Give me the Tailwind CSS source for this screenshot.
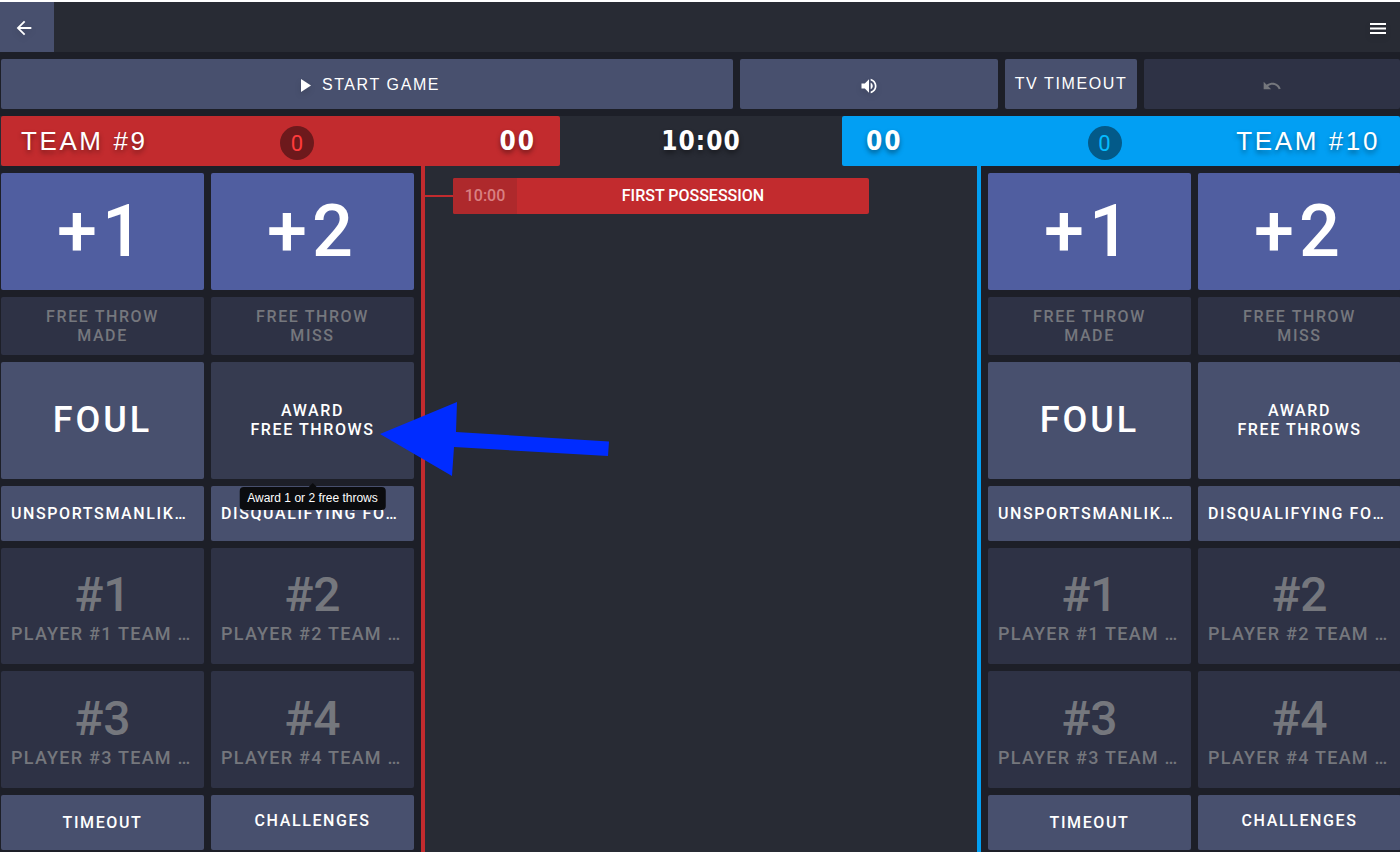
<!DOCTYPE html>
<html lang="en">
<head>
<meta charset="utf-8">
<meta name="viewport" content="width=device-width, initial-scale=1">
<title>Game scoring</title>
<script src="https://cdn.jsdelivr.net/npm/@tailwindcss/browser@4"></script>
</head>
<body class="flex min-h-screen flex-col overflow-x-hidden border-t-2 border-white bg-[#1d1f28] font-['Roboto',sans-serif] font-medium text-white text-shadow-[0_3px_5px_rgb(0_0_0/0.4)]">

<header class="flex h-[50px] items-stretch justify-between bg-[#282b34]">
  <button aria-label="Back" class="flex w-[54px] items-center justify-center bg-[#48506e] pr-1.5 pt-0.5">
    <svg class="size-[22px] drop-shadow-md" viewBox="0 0 24 24" fill="#fff"><path d="M20 11H7.830l5.590-5.590L12 4l-8 8 8 8 1.410-1.410L7.830 13H20v-2z"/></svg>
  </button>
  <button aria-label="Menu" class="flex items-center pr-3 pt-0.5">
    <svg class="size-5 drop-shadow-md" viewBox="0 0 20 20" fill="#fff"><path d="M2 5h16v2H2zM2 9.500h16v2H2zM2 14h16v2H2z"/></svg>
  </button>
</header>

<div class="mt-[7px] grid h-[50px] grid-cols-[732fr_258fr_132fr_256fr] gap-[7px] pl-px font-['Liberation_Sans',sans-serif] tracking-widest">
  <button class="flex items-center justify-center gap-2 rounded-xs bg-[#48506e] pl-1 pt-0.5">
    <svg class="size-4 drop-shadow-md" viewBox="0 0 16 16" fill="#fff"><path d="M3 2v13l10-6.500z"/></svg>
    <span class="text-base">START GAME</span>
  </button>
  <button aria-label="Sound" class="flex items-center justify-center rounded-xs bg-[#48506e] pt-1">
    <svg class="size-5 drop-shadow-md" viewBox="0 0 24 24" fill="#fff"><path d="M3 9v6h4l5 5V4L7 9H3zm13.500 3c0-1.770-1.020-3.290-2.500-4.030v8.050c1.480-.73 2.500-2.250 2.500-4.020zM14 3.230v2.060c2.890.86 5 3.540 5 6.710s-2.110 5.850-5 6.710v2.060c4.010-.91 7-4.490 7-8.770s-2.990-7.860-7-8.770z"/></svg>
  </button>
  <button class="whitespace-nowrap rounded-xs bg-[#48506e] text-base">TV TIMEOUT</button>
  <button aria-label="Undo" disabled class="flex items-center justify-center rounded-xs bg-[#2e3245] pt-1">
    <svg class="size-5" viewBox="0 0 24 24" fill="#75777d"><path d="M12.500 8c-2.650 0-5.050.99-6.900 2.600L2 7v9h9l-3.620-3.620c1.390-1.160 3.160-1.880 5.120-1.880 3.540 0 6.550 2.310 7.600 5.500l2.370-.78C21.080 11.030 17.150 8 12.500 8z"/></svg>
  </button>
</div>

<div class="mt-[7px] grid h-[50px] grid-cols-[560fr_282fr_558fr] bg-[#282b34] font-['Liberation_Sans',sans-serif]">
  <div class="ml-px grid grid-cols-[7fr_auto_6fr] items-center rounded-xs bg-[#c22b2e] pl-5 pr-6">
    <span class="text-[26px] tracking-widest">TEAM #9</span>
    <span class="mt-1 flex size-[34px] items-center justify-center rounded-full bg-[#6d191c] font-['Roboto',sans-serif] text-[22px] font-normal text-[#ff3b3b] text-shadow-none">0</span>
    <span class="text-right font-['DejaVu_Sans_Condensed','DejaVu_Sans',sans-serif] text-[26px] font-bold tracking-[2px]">00</span>
  </div>
  <div class="flex items-center justify-center font-['DejaVu_Sans_Condensed','DejaVu_Sans',sans-serif] text-[26px] font-bold tracking-[1px]">10:00</div>
  <div class="grid grid-cols-[6fr_auto_7fr] items-center rounded-xs bg-[#029ff3] pl-6 pr-5">
    <span class="font-['DejaVu_Sans_Condensed','DejaVu_Sans',sans-serif] text-[26px] font-bold tracking-[2px]">00</span>
    <span class="mt-1 flex size-[34px] items-center justify-center rounded-full bg-[#035a89] font-['Roboto',sans-serif] text-[22px] font-normal text-[#04bcff] text-shadow-none">0</span>
    <span class="text-right text-[26px] tracking-widest">TEAM #10</span>
  </div>
</div>

<main class="grid grow grid-cols-[425fr_552fr_423fr]">
  <section aria-label="Team 9" class="border-r-4 border-[#c22b2e] pb-0.5 pl-px pr-[7px] pt-[7px]">
    <div class="grid h-full grid-cols-2 grid-rows-[117fr_58fr_117fr_55fr_116fr_117fr_55fr] gap-[7px] text-base leading-[19px] tracking-widest">
      <button class="rounded-xs bg-[#505ea0] text-[72px] leading-none tracking-[5px]">+1</button>
      <button class="rounded-xs bg-[#505ea0] text-[72px] leading-none tracking-[5px]">+2</button>
      <button disabled class="rounded-xs bg-[#2e3245] text-[#75777d]">FREE THROW<br>MADE</button>
      <button disabled class="rounded-xs bg-[#2e3245] text-[#75777d]">FREE THROW<br>MISS</button>
      <button class="rounded-xs bg-[#48506e] pb-0.5 text-4xl tracking-[3px]">FOUL</button>
      <div class="relative grid">
        <button aria-describedby="award-tip" class="rounded-xs bg-[#363b50] pb-0.5">AWARD<br>FREE THROWS</button>
        <div id="award-tip" role="tooltip" class="absolute left-1/2 top-full z-10 mt-2 -translate-x-1/2 whitespace-nowrap rounded-sm bg-[#0b0c0f] px-2 py-0.5 font-['Liberation_Sans',sans-serif] text-xs leading-[19px] font-normal tracking-normal text-shadow-none">
          <svg class="absolute -top-1 left-1/2 h-1 w-2 -translate-x-1/2" viewBox="0 0 8 4" fill="#0b0c0f"><path d="M0 4l4-4 4 4z"/></svg>
          Award 1 or 2 free throws
        </div>
        <svg aria-hidden="true" class="absolute left-[169px] top-[39px] z-10 h-[76px] w-[229px]" viewBox="0 0 229 76" fill="#002cff"><path d="M0 33L77 1 76 31 229 40.500 228 55 74 46 72 75z"/></svg>
      </div>
      <button class="truncate rounded-xs bg-[#48506e] px-2.5 text-left">UNSPORTSMANLIKE FOUL</button>
      <button class="truncate rounded-xs bg-[#48506e] px-2.5 text-left">DISQUALIFYING FOUL</button>
      <button disabled class="min-w-0 rounded-xs bg-[#2e3245] px-2.5 pt-1 text-[#75777d]"><span class="block text-5xl leading-[50px] tracking-normal">#1</span><span class="mt-0.5 block truncate text-left text-lg leading-6 tracking-[0.07em]">PLAYER #1 TEAM #9</span></button>
      <button disabled class="min-w-0 rounded-xs bg-[#2e3245] px-2.5 pt-1 text-[#75777d]"><span class="block text-5xl leading-[50px] tracking-normal">#2</span><span class="mt-0.5 block truncate text-left text-lg leading-6 tracking-[0.07em]">PLAYER #2 TEAM #9</span></button>
      <button disabled class="min-w-0 rounded-xs bg-[#2e3245] px-2.5 pt-1 text-[#75777d]"><span class="block text-5xl leading-[50px] tracking-normal">#3</span><span class="mt-0.5 block truncate text-left text-lg leading-6 tracking-[0.07em]">PLAYER #3 TEAM #9</span></button>
      <button disabled class="min-w-0 rounded-xs bg-[#2e3245] px-2.5 pt-1 text-[#75777d]"><span class="block text-5xl leading-[50px] tracking-normal">#4</span><span class="mt-0.5 block truncate text-left text-lg leading-6 tracking-[0.07em]">PLAYER #4 TEAM #9</span></button>
      <button class="rounded-xs bg-[#48506e]">TIMEOUT</button>
      <button class="rounded-xs bg-[#48506e] pb-1">CHALLENGES</button>
    </div>
  </section>

  <section aria-label="Game log" class="bg-[#282b34] pt-3">
    <div class="flex items-center">
      <span class="h-0.5 w-7 bg-[#c22b2e]"></span>
      <div class="flex h-9 w-[416px] items-center overflow-hidden rounded-xs bg-[#c22b2e] text-base text-shadow-none">
        <span class="flex h-full w-16 items-center justify-center bg-[#ae292c] text-[#d98082]">10:00</span>
        <span class="grow text-center">FIRST POSSESSION</span>
      </div>
    </div>
  </section>

  <section aria-label="Team 10" class="-mr-px border-l-4 border-[#029ff3] pb-0.5 pl-[7px] pt-[7px]">
    <div class="grid h-full grid-cols-2 grid-rows-[117fr_58fr_117fr_55fr_116fr_117fr_55fr] gap-[7px] text-base leading-[19px] tracking-widest">
      <button class="rounded-xs bg-[#505ea0] text-[72px] leading-none tracking-[5px]">+1</button>
      <button class="rounded-xs bg-[#505ea0] text-[72px] leading-none tracking-[5px]">+2</button>
      <button disabled class="rounded-xs bg-[#2e3245] text-[#75777d]">FREE THROW<br>MADE</button>
      <button disabled class="rounded-xs bg-[#2e3245] text-[#75777d]">FREE THROW<br>MISS</button>
      <button class="rounded-xs bg-[#48506e] pb-0.5 text-4xl tracking-[3px]">FOUL</button>
      <button class="rounded-xs bg-[#48506e] pb-0.5">AWARD<br>FREE THROWS</button>
      <button class="truncate rounded-xs bg-[#48506e] px-2.5 text-left">UNSPORTSMANLIKE FOUL</button>
      <button class="truncate rounded-xs bg-[#48506e] px-2.5 text-left">DISQUALIFYING FOUL</button>
      <button disabled class="min-w-0 rounded-xs bg-[#2e3245] px-2.5 pt-1 text-[#75777d]"><span class="block text-5xl leading-[50px] tracking-normal">#1</span><span class="mt-0.5 block truncate text-left text-lg leading-6 tracking-[0.07em]">PLAYER #1 TEAM #10</span></button>
      <button disabled class="min-w-0 rounded-xs bg-[#2e3245] px-2.5 pt-1 text-[#75777d]"><span class="block text-5xl leading-[50px] tracking-normal">#2</span><span class="mt-0.5 block truncate text-left text-lg leading-6 tracking-[0.07em]">PLAYER #2 TEAM #10</span></button>
      <button disabled class="min-w-0 rounded-xs bg-[#2e3245] px-2.5 pt-1 text-[#75777d]"><span class="block text-5xl leading-[50px] tracking-normal">#3</span><span class="mt-0.5 block truncate text-left text-lg leading-6 tracking-[0.07em]">PLAYER #3 TEAM #10</span></button>
      <button disabled class="min-w-0 rounded-xs bg-[#2e3245] px-2.5 pt-1 text-[#75777d]"><span class="block text-5xl leading-[50px] tracking-normal">#4</span><span class="mt-0.5 block truncate text-left text-lg leading-6 tracking-[0.07em]">PLAYER #4 TEAM #10</span></button>
      <button class="rounded-xs bg-[#48506e]">TIMEOUT</button>
      <button class="rounded-xs bg-[#48506e] pb-1">CHALLENGES</button>
    </div>
  </section>
</main>
</body>
</html>
